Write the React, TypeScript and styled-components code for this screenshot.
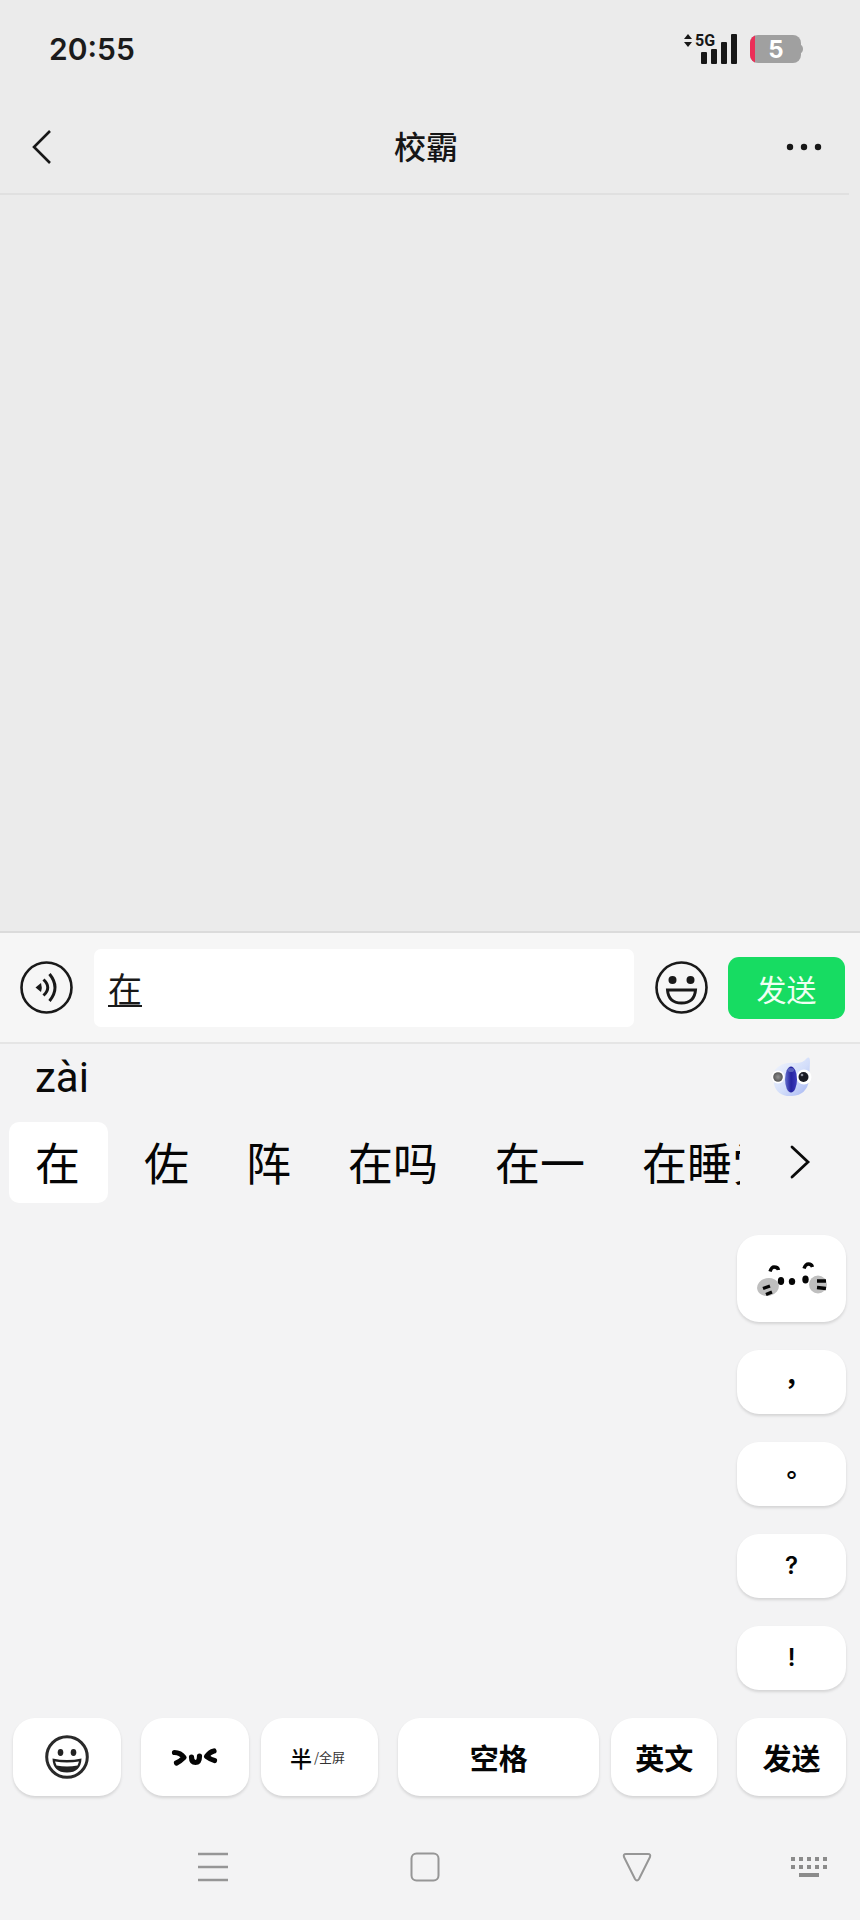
import React, { useState } from "react";
import styled, { createGlobalStyle } from "styled-components";

const GlobalStyle = createGlobalStyle`
  * { box-sizing: border-box; }
  html, body { margin: 0; background: #f3f3f3; }
  body { font-family: "Noto Sans CJK SC", "Noto Sans", sans-serif; color: #111; }
  button, input { font-family: inherit; color: inherit; border: 0; padding: 0; margin: 0; background: none; }
  button { cursor: pointer; }
  svg { display: block; overflow: visible; }
`;

const Screen = styled.main`
  display: flex;
  flex-direction: column;
  min-height: 100vh;
  background: #ebebeb;
`;

const StatusBar = styled.div`
  display: flex;
  align-items: center;
  justify-content: space-between;
  height: 98px;
  padding: 0 56px 0 49px;
`;

const Clock = styled.time`
  font: 600 30px/40px Inter, sans-serif;
  color: #1b1b1b;
`;

const StatusIcons = styled.div`
  display: flex;
  align-items: center;
  gap: 13px;
`;

const ChatHeader = styled.header`
  display: flex;
  align-items: center;
  justify-content: space-between;
  height: 97px;
  padding: 2px 27px 0 30px;
  margin-right: 11px;
  border-bottom: 2px solid #e0e0e0;
`;

const Title = styled.h1`
  margin: 0;
  padding-bottom: 4px;
  font-size: 32px;
  line-height: 48px;
  font-weight: 500;
  color: #161616;
`;

const HeaderButton = styled.button`
  display: flex;
  align-items: center;
  width: 36px;
  height: 48px;
`;

const Messages = styled.section`
  flex: 1;
`;

const Composer = styled.form`
  display: flex;
  align-items: center;
  height: 113px;
  padding: 0 15px 0 20px;
  background: #f6f6f6;
  border-top: 2px solid #dbdbdb;
  border-bottom: 2px solid #e5e5e5;
`;

const RoundButton = styled.button`
  width: 53px;
  height: 53px;
  flex: none;
`;

const MessageInput = styled.input`
  flex: 1;
  min-width: 0;
  height: 78px;
  margin: 0 21px;
  padding: 0 14px;
  border-radius: 7px;
  background: #fff;
  font-size: 34px;
  font-weight: 400;
  color: #191919;
  text-decoration: underline;
  text-decoration-thickness: 2px;
  text-underline-offset: 3px;
  outline: none;
`;

const SendButton = styled.button`
  flex: none;
  width: 117px;
  height: 62px;
  margin-left: 20px;
  border-radius: 11px;
  background: #17dc62;
  color: #f0fff2;
  font-size: 30px;
  line-height: 44px;
`;

const Keyboard = styled.section`
  background: #f3f3f4;
`;

const Reading = styled.div`
  display: flex;
  align-items: center;
  justify-content: space-between;
  height: 68px;
  padding: 0 48px 0 35px;
  font: 400 42px/56px Roboto, sans-serif;
  color: #0a0a0a;
`;

const CandidateBar = styled.div`
  display: flex;
  align-items: center;
  height: 100px;
  padding-left: 9px;
`;

const CandidateList = styled.div`
  display: flex;
  flex: 1;
  gap: 1px;
  min-width: 0;
  overflow: hidden;
`;

const Candidate = styled.button<{ $selected?: boolean }>`
  flex: none;
  height: 81px;
  padding: ${(p) => (p.$selected ? "0 28px 0 26px" : "0 28px")};
  margin-right: ${(p) => (p.$selected ? "7px" : "0")};
  border-radius: 10px;
  background: ${(p) => (p.$selected ? "#fff" : "transparent")};
  font-size: 45px;
  line-height: 80px;
  white-space: nowrap;
  color: #050505;
`;

const MoreButton = styled.button`
  display: flex;
  align-items: center;
  justify-content: center;
  flex: none;
  width: 120px;
  height: 80px;
`;

const Key = styled.button<{ $grow?: number; $height?: number }>`
  display: flex;
  align-items: center;
  justify-content: center;
  flex: ${(p) => p.$grow ?? 1} 1 0;
  min-width: 0;
  height: ${(p) => p.$height ?? 78}px;
  border-radius: 22px;
  background: #fff;
  box-shadow: 0 2px 3px rgba(0, 0, 0, 0.13);
  font-size: 29px;
  line-height: 40px;
  font-weight: 700;
  white-space: nowrap;
  color: #050505;
`;

const SideKeys = styled.div`
  display: flex;
  flex-direction: column;
  gap: 28px;
  width: 109px;
  margin: 23px 14px 28px auto;
`;

const SideKey = styled(Key)<{ $wide?: boolean }>`
  flex: none;
  font: ${(p) => (p.$wide ? '700 26px/32px "Noto Sans CJK TC"' : "600 24px/32px Inter")}, sans-serif;
`;

const BottomRow = styled.div`
  display: flex;
  gap: 20px;
  padding: 0 14px 0 13px;
`;

const KeyGroup = styled.div<{ $grow: number }>`
  display: flex;
  flex: ${(p) => p.$grow} 1 0;
  gap: 12px;
`;

const SendGroup = styled.div`
  display: flex;
  flex: none;
  width: 109px;
`;

const HalfLabel = styled.span`
  font-size: 22px;
  font-weight: 500;
`;

const FullLabel = styled.span`
  padding: 0 4px 0 2px;
  font-size: 13px;
  font-weight: 400;
  color: #333;
`;

const SystemNav = styled.nav`
  display: grid;
  grid-template-columns: 107fr 212fr 212fr 212fr 117fr;
  align-items: center;
  height: 124px;
  padding-top: 18px;
`;

const NavButton = styled.button<{ $column: number }>`
  grid-column: ${(p) => p.$column};
  display: flex;
  justify-content: center;
  padding: ${(p) => (p.$column === 5 ? "8px 0 8px 14px" : "8px 0")};
`;

const SignalIcon = () => (
  <svg width="53" height="30" viewBox="0 0 53 30" fill="#171717" role="img" aria-label="5G">
    <path d="M4 0l4 5H0zM0 8h8l-4 5z" />
    <text x="11" y="12" fontFamily="Roboto, sans-serif" fontWeight="700" fontSize="16">5G</text>
    <rect x="17" y="18" width="6" height="12" rx="1" />
    <rect x="27" y="15" width="6" height="15" rx="1" />
    <rect x="37" y="8" width="6" height="22" rx="1" />
    <rect x="47" y="0" width="6" height="30" rx="1" />
  </svg>
);

const BatteryIcon = () => (
  <svg width="54" height="28" viewBox="0 0 54 28" role="img" aria-label="5%">
    <defs>
      <clipPath id="batteryCase">
        <rect width="51" height="28" rx="8" />
      </clipPath>
    </defs>
    <path d="M49 9q4 1 4 5t-4 5z" fill="#a0a0a0" />
    <rect width="51" height="28" rx="8" fill="#a0a0a0" />
    <rect width="5" height="28" fill="#ec2e58" clipPath="url(#batteryCase)" />
    <text x="26" y="23" textAnchor="middle" fontFamily="Inter, sans-serif" fontWeight="700" fontSize="24" fill="#fff">5</text>
  </svg>
);

const VoiceIcon = () => (
  <svg width="53" height="53" viewBox="0 0 53 53" fill="none" stroke="#191919" strokeWidth="2.6">
    <circle cx="26.5" cy="26.5" r="25" />
    <path d="M15.5 26.5l5.500-4.500q1.500 4.500 0 9z" fill="#191919" stroke="none" />
    <path d="M23.500 18.500q8.500 8 0 16M29.500 13q11 13.500 0 27" strokeWidth="3" />
  </svg>
);

const SmileIcon = () => (
  <svg width="53" height="53" viewBox="0 0 53 53" fill="none" stroke="#191919" strokeWidth="2.6">
    <circle cx="26.500" cy="26.500" r="25" />
    <circle cx="17.500" cy="19" r="4" fill="#191919" stroke="none" />
    <circle cx="35.500" cy="19" r="4" fill="#191919" stroke="none" />
    <path d="M12.500 29h28q-1 13-14 13t-14-13z" strokeWidth="3" />
  </svg>
);

const KoalaIcon = () => (
  <svg width="42" height="42" viewBox="0 0 42 42" aria-hidden="true">
    <defs>
      <linearGradient id="koalaBody" x1="0" y1="0" x2="1" y2="1">
        <stop offset="0" stopColor="#f3f6fd" />
        <stop offset=".55" stopColor="#d3defa" />
        <stop offset="1" stopColor="#a3b3f2" />
      </linearGradient>
      <linearGradient id="koalaNose">
        <stop offset="0" stopColor="#6470cd" />
        <stop offset=".5" stopColor="#2422a0" />
        <stop offset="1" stopColor="#3c3bbd" />
      </linearGradient>
      <radialGradient id="koalaEye">
        <stop offset="0" stopColor="#929292" />
        <stop offset="1" stopColor="#555" />
      </radialGradient>
    </defs>
    <path d="M5 13q7-9 21-7 7 0 10-4 4-4 4 3l-1 18q-2 15-17 16Q7 40 4 27z" fill="url(#koalaBody)" />
    <circle cx="8" cy="20" r="6.500" fill="#fff" />
    <circle cx="34" cy="20" r="7.500" fill="#fff" />
    <circle cx="8" cy="20" r="4.800" fill="url(#koalaEye)" />
    <circle cx="33.500" cy="20" r="5" fill="#191b25" />
    <circle cx="32" cy="18" r="1.300" fill="#8e919f" />
    <ellipse cx="21" cy="22.500" rx="6" ry="13" fill="url(#koalaNose)" />
    <ellipse cx="21" cy="13" rx="3" ry="2" fill="#6d79c8" opacity=".7" />
  </svg>
);

const BlushFaceIcon = () => (
  <svg width="70" height="36" viewBox="0 0 70 36" fill="#050505">
    <ellipse cx="11" cy="26" rx="11" ry="9" fill="#bfbfbf" transform="rotate(-12 11 26)" />
    <ellipse cx="61" cy="23.500" rx="9" ry="9" fill="#bfbfbf" />
    <ellipse cx="24" cy="20" rx="3.200" ry="4" />
    <ellipse cx="35" cy="20.500" rx="3.200" ry="3.600" />
    <ellipse cx="48.500" cy="18.500" rx="3.200" ry="4" />
    <g fill="none" stroke="#050505" strokeWidth="3.400">
      <path d="M13 10.500q1.500-4.500 4-4.500 4 0 4.500 3M47 7.500q1.500-4.500 4.500-4.500t4 3" />
      <path d="M6 27.500l7-2.500M9 33.500l6-2.500M60 20h9M60 26.500l9 1" />
    </g>
  </svg>
);

const GrinIcon = () => (
  <svg width="44" height="44" viewBox="0 0 44 44" fill="#222">
    <circle cx="22" cy="22" r="20.300" fill="none" stroke="#2a2a2a" strokeWidth="3" />
    <ellipse cx="15.500" cy="17.500" rx="2.800" ry="3.400" />
    <ellipse cx="28.500" cy="17.500" rx="2.800" ry="3.400" />
    <path d="M7.500 23.500q14.500 3 29 0-.5 14-14.500 14t-14.500-14z" />
    <path d="M10 26.500q12 2 24 0l-1.500 4q-10.500 2-21 0z" fill="#fff" />
  </svg>
);

const SquintIcon = () => (
  <svg width="48" height="22" viewBox="0 0 48 22" fill="none" stroke="#050505" strokeWidth="5.200" strokeLinecap="round" strokeLinejoin="round">
    <path d="M3.500 6.500q6 0 9.500 5-4 4-7.500 5.500" />
    <path d="M20.500 11q0 5.500 4 5.500T28.500 10" />
    <path d="M43 5q-4.500 1-7.500 5.500 4 3 8 4" />
  </svg>
);

const navIcons = [
  {
    label: "最近任务",
    icon: (
      <svg width="30" height="30" viewBox="0 0 30 30" stroke="#969696" strokeWidth="2.400">
        <path d="M0 2h30M0 15h30M0 28h30" />
      </svg>
    ),
  },
  {
    label: "主屏幕",
    icon: (
      <svg width="30" height="30" viewBox="0 0 30 30" fill="none" stroke="#969696" strokeWidth="2">
        <rect x="1.500" y="1.500" width="27" height="27" rx="5" />
      </svg>
    ),
  },
  {
    label: "返回",
    icon: (
      <svg width="30" height="30" viewBox="0 0 30 30" fill="none" stroke="#969696" strokeWidth="2" strokeLinejoin="round">
        <path d="M4 2h22q3 0 2 3L17 27q-2 3-4 0L2 5q-1-3 2-3z" />
      </svg>
    ),
  },
  {
    label: "切换键盘",
    icon: (
      <svg width="38" height="22" viewBox="0 0 38 22" fill="#8b8b8b">
        {[0, 8, 16, 24, 32].map((x) => (
          <React.Fragment key={x}>
            <rect x={x + 1} y="1" width="4" height="4" />
            <rect x={x + 1} y="9" width="4" height="4" />
          </React.Fragment>
        ))}
        <rect x="9" y="17" width="20" height="4" />
      </svg>
    ),
  },
];

const candidates = ["在", "佐", "阵", "在吗", "在一", "在睡觉"];
const punctuation = ["，", "。", "?", "!"];

export default function App() {
  const [message, setMessage] = useState("在");

  return (
    <>
      <GlobalStyle />
      <Screen>
        <StatusBar>
          <Clock>20:55</Clock>
          <StatusIcons>
            <SignalIcon />
            <BatteryIcon />
          </StatusIcons>
        </StatusBar>
        <ChatHeader>
          <HeaderButton aria-label="返回">
            <svg width="24" height="36" viewBox="0 0 24 36" fill="none" stroke="#171717" strokeWidth="2.600">
              <path d="M20 2L4 18l16 16" />
            </svg>
          </HeaderButton>
          <Title>校霸</Title>
          <HeaderButton aria-label="更多">
            <svg width="36" height="8" viewBox="0 0 36 8" fill="#171717">
              <circle cx="4" cy="4" r="3.200" />
              <circle cx="18" cy="4" r="3.200" />
              <circle cx="32" cy="4" r="3.200" />
            </svg>
          </HeaderButton>
        </ChatHeader>
        <Messages aria-label="聊天记录" />
        <Composer onSubmit={(e) => e.preventDefault()}>
          <RoundButton type="button" aria-label="语音">
            <VoiceIcon />
          </RoundButton>
          <MessageInput aria-label="消息" value={message} onChange={(e) => setMessage(e.target.value)} />
          <RoundButton type="button" aria-label="表情">
            <SmileIcon />
          </RoundButton>
          <SendButton type="submit">发送</SendButton>
        </Composer>
        <Keyboard>
          <Reading>
            <span>zài</span>
            <KoalaIcon />
          </Reading>
          <CandidateBar>
            <CandidateList>
              {candidates.map((word, i) => (
                <Candidate key={word} $selected={i === 0}>
                  {word}
                </Candidate>
              ))}
            </CandidateList>
            <MoreButton aria-label="更多候选">
              <svg width="24" height="36" viewBox="0 0 24 36" fill="none" stroke="#0a0a0a" strokeWidth="2.800" strokeLinecap="round">
                <path d="M4 3l16 15L4 33" />
              </svg>
            </MoreButton>
          </CandidateBar>
          <SideKeys>
            <SideKey $height={87} aria-label="颜文字">
              <BlushFaceIcon />
            </SideKey>
            {punctuation.map((mark) => (
              <SideKey key={mark} $height={64} $wide={mark === "，" || mark === "。"}>
                {mark}
              </SideKey>
            ))}
          </SideKeys>
          <BottomRow>
            <KeyGroup $grow={108}>
              <Key aria-label="表情">
                <GrinIcon />
              </Key>
            </KeyGroup>
            <KeyGroup $grow={237}>
              <Key $grow={108} aria-label="颜文字">
                <SquintIcon />
              </Key>
              <Key $grow={117}>
                <HalfLabel>半</HalfLabel>
                <FullLabel>/全屏</FullLabel>
              </Key>
            </KeyGroup>
            <KeyGroup $grow={319}>
              <Key $grow={202}>空格</Key>
              <Key $grow={106}>英文</Key>
            </KeyGroup>
            <SendGroup>
              <Key>发送</Key>
            </SendGroup>
          </BottomRow>
          <SystemNav>
            {navIcons.map((item, i) => (
              <NavButton key={item.label} $column={i + 2} aria-label={item.label}>
                {item.icon}
              </NavButton>
            ))}
          </SystemNav>
        </Keyboard>
      </Screen>
    </>
  );
}
